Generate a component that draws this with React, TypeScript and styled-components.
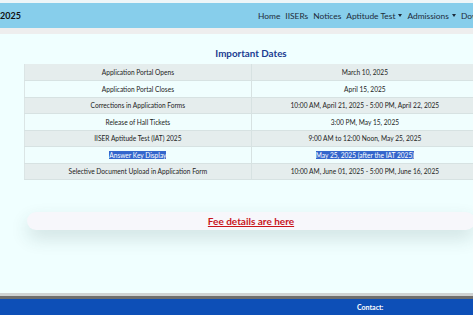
import React from "react";
import styled, { createGlobalStyle } from "styled-components";

const GlobalStyle = createGlobalStyle`
  html, body { margin: 0; padding: 0; }
  body {
    background: #f0ffff;
    overflow: hidden;
    font-family: Lato, "Noto Sans", sans-serif;
    color: #222;
  }
`;

const Page = styled.div`
  width: 502px;
  height: 315px;
  display: flex;
  flex-direction: column;
`;

const TopStrip = styled.div`
  height: 3px;
  background: #eef6f8;
`;

const Navbar = styled.nav`
  height: 25px;
  background: #87ceeb;
  display: flex;
  align-items: center;
  justify-content: space-between;
`;

const Brand = styled.div`
  font-weight: 700;
  font-size: 9px;
  color: #111;
`;

const NavList = styled.ul`
  list-style: none;
  display: flex;
  gap: 5px;
  margin: 0;
  padding: 0;
  width: 244px;
  overflow: hidden;
  white-space: nowrap;
`;

const NavItem = styled.li`
  font-size: 8.4px;
  color: #1d2b3a;
  display: flex;
  align-items: center;
  gap: 2px;
`;

const Caret = styled.span`
  display: inline-block;
  width: 0;
  height: 0;
  border-left: 2.5px solid transparent;
  border-right: 2.5px solid transparent;
  border-top: 3px solid #1d2b3a;
  margin-left: 1px;
`;

const Band = styled.div`
  height: 6px;
  background: #eeeeee;
`;

const Main = styled.main`
  padding: 12px 24px 0;
  display: flex;
  flex-direction: column;
`;

const Title = styled.h2`
  margin: 0 0 4px;
  text-align: center;
  font-size: 9.8px;
  font-weight: 700;
  color: #1b3d92;
  height: 14px;
  line-height: 14px;
`;

const Table = styled.table`
  width: 100%;
  border-collapse: collapse;
  border-left: 1px solid #dbe5e5;
`;

const Row = styled.tr<{ $odd: boolean }>`
  height: 16.5px;
  background: ${(p) => (p.$odd ? "#e5eded" : "#f0fefe")};
  border-bottom: 1px solid #d7e2e2;
`;

const Cell = styled.td<{ $first?: boolean }>`
  width: 50%;
  padding: 0;
  text-align: center;
  font-size: 6.6px;
  color: #222;
  border-right: ${(p) => (p.$first ? "1px solid #d7e2e2" : "none")};
`;

const Selected = styled.span`
  background: #3466cc;
  color: #fff;
`;

const FeeWrap = styled.div`
  padding: 32px 3px 0;
`;

const FeeBox = styled.div`
  height: 18px;
  border-radius: 9px;
  background: #f7f7fb;
  box-shadow: 0 8px 18px rgba(40, 70, 70, 0.16);
  display: flex;
  align-items: center;
  justify-content: center;
`;

const FeeLink = styled.a`
  color: #c8141a;
  font-weight: 700;
  font-size: 10px;
  text-decoration: underline;
`;

const Spacer = styled.div`
  flex: 1;
`;

const Footer = styled.footer`
  border-top: 3px solid #cfd3d3;
`;

const FooterLine = styled.div`
  height: 3px;
  background: #6e6e6e;
`;

const FooterBody = styled.div`
  height: 16px;
  background: #0d4fb7;
  display: grid;
  grid-template-columns: 357px auto;
  align-items: center;
`;

const Contact = styled.div`
  grid-column: 2;
  color: #fff;
  font-weight: 700;
  font-size: 7px;
`;

const dates: [string, string][] = [
  ["Application Portal Opens", "March 10, 2025"],
  ["Application Portal Closes", "April 15, 2025"],
  ["Corrections in Application Forms", "10:00 AM, April 21, 2025 - 5:00 PM, April 22, 2025"],
  ["Release of Hall Tickets", "3:00 PM, May 15, 2025"],
  ["IISER Aptitude Test (IAT) 2025", "9:00 AM to 12:00 Noon, May 25, 2025"],
  ["Answer Key Display", "May 25, 2025 (after the IAT 2025)"],
  ["Selective Document Upload in Application Form", "10:00 AM, June 01, 2025 - 5:00 PM, June 16, 2025"],
];

const navItems: { label: string; dropdown?: boolean }[] = [
  { label: "Home" },
  { label: "IISERs" },
  { label: "Notices" },
  { label: "Aptitude Test", dropdown: true },
  { label: "Admissions", dropdown: true },
  { label: "Downloads" },
];

export default function App() {
  return (
    <>
      <GlobalStyle />
      <Page>
        <TopStrip />
        <Navbar>
          <Brand>2025</Brand>
          <NavList>
            {navItems.map((n) => (
              <NavItem key={n.label}>
                {n.label}
                {n.dropdown && <Caret />}
              </NavItem>
            ))}
          </NavList>
        </Navbar>
        <Band />
        <Main>
          <Title>Important Dates</Title>
          <Table>
            <tbody>
              {dates.map(([event, date], i) => {
                const sel = event === "Answer Key Display";
                return (
                  <Row key={event} $odd={i % 2 === 0}>
                    <Cell $first>{sel ? <Selected>{event}</Selected> : event}</Cell>
                    <Cell>{sel ? <Selected>{date}</Selected> : date}</Cell>
                  </Row>
                );
              })}
            </tbody>
          </Table>
          <FeeWrap>
            <FeeBox>
              <FeeLink href="#">Fee details are here</FeeLink>
            </FeeBox>
          </FeeWrap>
        </Main>
        <Spacer />
        <Footer>
          <FooterLine />
          <FooterBody>
            <Contact>Contact:</Contact>
          </FooterBody>
        </Footer>
      </Page>
    </>
  );
}
